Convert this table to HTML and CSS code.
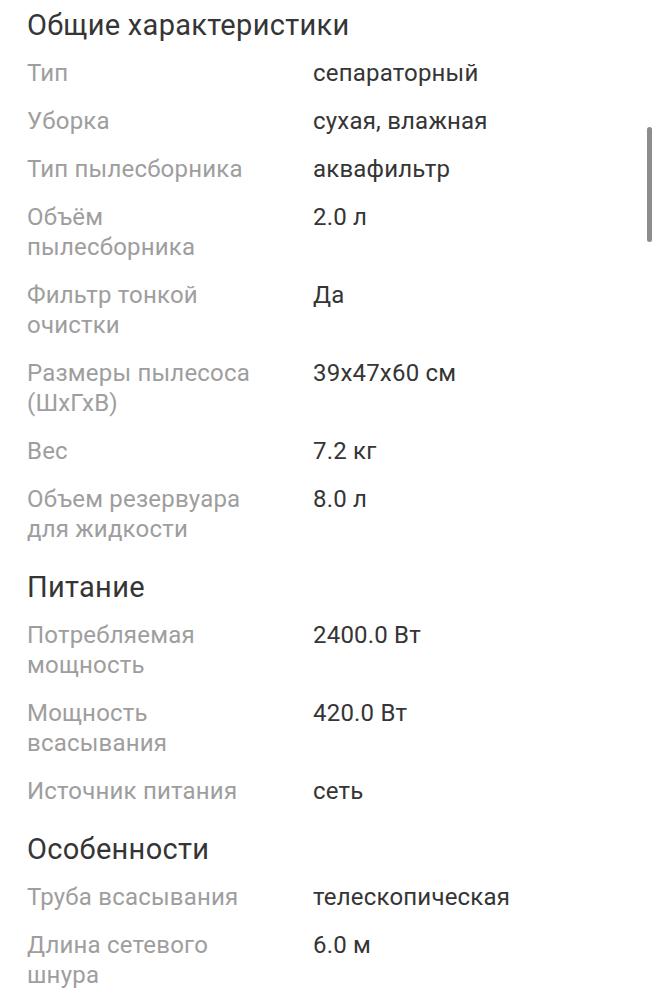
FILE: index.html
```html
<!DOCTYPE html>
<html lang="ru">
<head>
<meta charset="utf-8">
<title>Характеристики</title>
<link rel="stylesheet" href="styles.css">
</head>
<body>
<main class="specs">
  <section class="group">
    <h2 class="group-title">Общие характеристики</h2>
    <dl class="rows">
      <dt>Тип</dt><dd>сепараторный</dd>
      <dt>Уборка</dt><dd>сухая, влажная</dd>
      <dt>Тип пылесборника</dt><dd>аквафильтр</dd>
      <dt>Объём пылесборника</dt><dd>2.0 л</dd>
      <dt>Фильтр тонкой очистки</dt><dd>Да</dd>
      <dt>Размеры пылесоса (ШхГхВ)</dt><dd>39x47x60 см</dd>
      <dt>Вес</dt><dd>7.2 кг</dd>
      <dt>Объем резервуара для жидкости</dt><dd>8.0 л</dd>
    </dl>
  </section>
  <section class="group">
    <h2 class="group-title">Питание</h2>
    <dl class="rows">
      <dt>Потребляемая мощность</dt><dd>2400.0 Вт</dd>
      <dt>Мощность всасывания</dt><dd>420.0 Вт</dd>
      <dt>Источник питания</dt><dd>сеть</dd>
    </dl>
  </section>
  <section class="group">
    <h2 class="group-title">Особенности</h2>
    <dl class="rows">
      <dt>Труба всасывания</dt><dd>телескопическая</dd>
      <dt>Длина сетевого шнура</dt><dd>6.0 м</dd>
    </dl>
  </section>
</main>
<div class="scrollbar"></div>
</body>
</html>
```
FILE: styles.css
```css
html, body {
  margin: 0;
  background: #ffffff;
}
body {
  font-family: Roboto, "Noto Sans", "Liberation Sans", sans-serif;
  padding: 8px 0 0 27px;
}
.group + .group {
  margin-top: 26px;
}
.group-title {
  margin: 0 0 16px;
  font-size: 29px;
  line-height: 34px;
  letter-spacing: 0.3px;
  font-weight: 400;
  color: #353535;
}
.rows {
  margin: 0;
  display: grid;
  grid-template-columns: 240px 1fr;
  column-gap: 46px;
  row-gap: 18px;
  font-size: 24px;
  line-height: 30px;
  letter-spacing: 0.2px;
}
.rows dt {
  color: #9e9e9e;
}
.rows dd {
  margin: 0;
  color: #353535;
}
.scrollbar {
  position: fixed;
  left: 647px;
  top: 127px;
  width: 5px;
  height: 115px;
  border-radius: 3px;
  background: #8c8c8c;
}
```
